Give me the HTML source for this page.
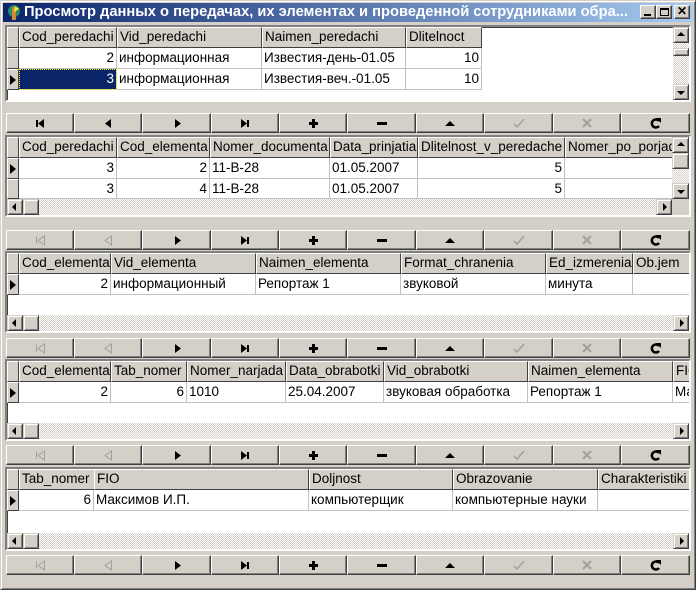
<!DOCTYPE html>
<html><head><meta charset="utf-8">
<style>
*{margin:0;padding:0;box-sizing:border-box}
body{width:696px;height:590px;background:#d4d0c8;position:relative;overflow:hidden;font-family:"Liberation Sans",Arial,sans-serif;font-size:13.5px;color:#000}
.win{position:absolute;left:0;top:0;width:696px;height:590px;border:1px solid;border-color:#d4d0c8 #404040 #404040 #d4d0c8;box-shadow:inset 1px 1px #fff,inset -1px -1px #808080}
.title{position:absolute;left:3px;top:3px;width:690px;height:19px;background:linear-gradient(to right,#0a246a,#a6caf0);color:#fff;font-weight:bold;font-size:14.7px;line-height:19px;padding-left:21px;white-space:nowrap;overflow:hidden}
.tb{position:absolute;top:5px;width:16px;height:14px;background:#d4d0c8;border:1px solid;border-color:#fff #404040 #404040 #fff;box-shadow:inset -1px -1px #808080}
.g{position:absolute;left:5px;width:686px;border:2px solid;border-color:#808080 #fff #fff #808080;box-shadow:inset 1px 1px #404040;background:#fff;overflow:hidden}
.gi{position:absolute;left:0;top:0;right:0;bottom:0;overflow:hidden}
.c{position:absolute;height:21px;line-height:20px;white-space:nowrap;overflow:hidden;padding:0 2px}
.h{background:#d4d0c8;border-left:1px solid #fff;border-top:1px solid #fff;border-right:1px solid #404040;border-bottom:1px solid #404040;line-height:18px}
.d{background:#fff;border-right:1px solid #c0c0c0;border-bottom:1px solid #c0c0c0}
.r{text-align:right}
.ind{background:#d4d0c8;border-left:1px solid #fff;border-top:1px solid #fff;border-right:1px solid #404040;border-bottom:1px solid #404040;width:12px}
.tri{position:absolute;left:2px;top:5px;width:0;height:0;border-left:6px solid #000;border-top:5px solid transparent;border-bottom:5px solid transparent}
.trk{position:absolute;background-color:#ece9e4;background-image:repeating-conic-gradient(#d4d0c8 0 25%,#fff 0 50%);background-size:2px 2px}
.sb{position:absolute;width:16px;height:16px;background:#d4d0c8;border:1px solid;border-color:#d4d0c8 #404040 #404040 #d4d0c8;box-shadow:inset 1px 1px #fff,inset -1px -1px #808080}
.sb i{position:absolute;left:50%;top:50%;width:0;height:0}
.up{margin:-3px 0 0 -4px;border-left:4px solid transparent;border-right:4px solid transparent;border-bottom:4px solid #000}
.dn{margin:-1px 0 0 -4px;border-left:4px solid transparent;border-right:4px solid transparent;border-top:4px solid #000}
.lt{margin:-4px 0 0 -3px;border-top:4px solid transparent;border-bottom:4px solid transparent;border-right:4px solid #000}
.rt{margin:-4px 0 0 -1px;border-top:4px solid transparent;border-bottom:4px solid transparent;border-left:4px solid #000}
.b{position:absolute;height:20px;background:#d4d0c8;border:1px solid;border-color:#fff #404040 #404040 #fff;box-shadow:inset -1px -1px #808080}
.b svg{position:absolute;left:50%;top:50%;margin:-6px 0 0 -6px}
</style></head><body>
<div class="win"></div>
<div class="title"><svg style="position:absolute;left:3px;top:1px" width="16" height="17" viewBox="0 0 16 17"><circle cx="8" cy="7" r="6" fill="#2a8a6a"/><path d="M6 3h4v13H6z" fill="#c83"/><path d="M9 2l4 3-5 3z" fill="#ee3"/></svg>Просмотр данных о передачах, их элементах и проведенной сотрудниками обра...</div>
<div class="tb" style="left:640px"><div style="position:absolute;left:3px;top:8px;width:7px;height:2px;background:#000"></div></div>
<div class="tb" style="left:656px"><div style="position:absolute;left:3px;top:2px;width:9px;height:8px;border:1px solid #000;border-top-width:2px"></div></div>
<div class="tb" style="left:674px"><div style="position:absolute;left:1px;top:-1px;font:bold 12px 'Liberation Sans';line-height:13px;width:12px;text-align:center">✕</div></div>

<!-- Grid 1 -->
<div class="g" style="top:25px;height:77px"><div class="gi">
<div class="c ind" style="left:0;top:0"></div>
<div class="c h" style="left:12px;top:0;width:98px">Cod_peredachi</div>
<div class="c h" style="left:110px;top:0;width:145px">Vid_peredachi</div>
<div class="c h" style="left:255px;top:0;width:144px">Naimen_peredachi</div>
<div class="c h" style="left:399px;top:0;width:76px">Dlitelnoct</div>
<div class="c ind" style="left:0;top:21px"></div>
<div class="c d r" style="left:12px;top:21px;width:98px">2</div>
<div class="c d" style="left:110px;top:21px;width:145px">информационная</div>
<div class="c d" style="left:255px;top:21px;width:144px">Известия-день-01.05</div>
<div class="c d r" style="left:399px;top:21px;width:76px">10</div>
<div class="c ind" style="left:0;top:42px"><div class="tri"></div></div>
<div class="c d r" style="left:12px;top:42px;width:98px;background:#0a246a;color:#fff;outline:1px dotted #ff0;outline-offset:-1px">3</div>
<div class="c d" style="left:110px;top:42px;width:145px">информационная</div>
<div class="c d" style="left:255px;top:42px;width:144px">Известия-веч.-01.05</div>
<div class="c d r" style="left:399px;top:42px;width:76px">10</div>
<div class="trk" style="left:666px;top:0;width:16px;height:73px"></div>
<div class="sb" style="left:666px;top:0"><i class="up"></i></div>
<div class="sb" style="left:666px;top:21px;height:8px"></div>
<div class="sb" style="left:666px;top:57px"><i class="dn"></i></div>
</div></div>

<!-- Grid 2 -->
<div class="g" style="top:135px;height:82px"><div class="gi">
<div class="c ind" style="left:0;top:0"></div>
<div class="c h" style="left:12px;top:0;width:98px">Cod_peredachi</div>
<div class="c h" style="left:110px;top:0;width:93px">Cod_elementa</div>
<div class="c h" style="left:203px;top:0;width:120px">Nomer_documenta</div>
<div class="c h" style="left:323px;top:0;width:88px">Data_prinjatia</div>
<div class="c h" style="left:411px;top:0;width:147px">Dlitelnost_v_peredache</div>
<div class="c h" style="left:558px;top:0;width:120px">Nomer_po_porjadku</div>
<div class="c ind" style="left:0;top:21px"><div class="tri"></div></div>
<div class="c d r" style="left:12px;top:21px;width:98px">3</div>
<div class="c d r" style="left:110px;top:21px;width:93px">2</div>
<div class="c d" style="left:203px;top:21px;width:120px">11-B-28</div>
<div class="c d" style="left:323px;top:21px;width:88px">01.05.2007</div>
<div class="c d r" style="left:411px;top:21px;width:147px">5</div>
<div class="c d" style="left:558px;top:21px;width:120px"></div>
<div class="c ind" style="left:0;top:42px;height:20px"></div>
<div class="c d r" style="left:12px;top:42px;width:98px;height:20px">3</div>
<div class="c d r" style="left:110px;top:42px;width:93px;height:20px">4</div>
<div class="c d" style="left:203px;top:42px;width:120px;height:20px">11-B-28</div>
<div class="c d" style="left:323px;top:42px;width:88px;height:20px">01.05.2007</div>
<div class="c d r" style="left:411px;top:42px;width:147px;height:20px">5</div>
<div class="c d" style="left:558px;top:42px;width:120px;height:20px"></div>
<div class="trk" style="left:665px;top:0;width:17px;height:62px"></div>
<div class="sb" style="left:665px;top:0;width:17px"><i class="up"></i></div>
<div class="sb" style="left:665px;top:16px;width:17px"></div>
<div class="sb" style="left:665px;top:46px;width:17px"><i class="dn"></i></div>
<div class="trk" style="left:0;top:62px;width:665px;height:16px"></div>
<div style="position:absolute;left:665px;top:62px;width:17px;height:16px;background:#d4d0c8"></div>
<div class="sb" style="left:0;top:62px"><i class="lt"></i></div>
<div class="sb" style="left:16px;top:62px"></div>
<div class="sb" style="left:649px;top:62px"><i class="rt"></i></div>
</div></div>

<!-- Grid 3 -->
<div class="g" style="top:251px;height:82px"><div class="gi">
<div class="c ind" style="left:0;top:0"></div>
<div class="c h" style="left:12px;top:0;width:92px">Cod_elementa</div>
<div class="c h" style="left:104px;top:0;width:145px">Vid_elementa</div>
<div class="c h" style="left:249px;top:0;width:145px">Naimen_elementa</div>
<div class="c h" style="left:394px;top:0;width:145px">Format_chranenia</div>
<div class="c h" style="left:539px;top:0;width:87px">Ed_izmerenia</div>
<div class="c h" style="left:626px;top:0;width:80px">Ob.jem</div>
<div class="c ind" style="left:0;top:21px"><div class="tri"></div></div>
<div class="c d r" style="left:12px;top:21px;width:92px">2</div>
<div class="c d" style="left:104px;top:21px;width:145px">информационный</div>
<div class="c d" style="left:249px;top:21px;width:145px">Репортаж 1</div>
<div class="c d" style="left:394px;top:21px;width:145px">звуковой</div>
<div class="c d" style="left:539px;top:21px;width:87px">минута</div>
<div class="c d" style="left:626px;top:21px;width:80px"></div>
<div class="trk" style="left:0;top:62px;width:682px;height:16px"></div>
<div class="sb" style="left:0;top:62px"><i class="lt"></i></div>
<div class="sb" style="left:16px;top:62px"></div>
<div class="sb" style="left:666px;top:62px"><i class="rt"></i></div>
</div></div>

<!-- Grid 4 -->
<div class="g" style="top:359px;height:82px"><div class="gi">
<div class="c ind" style="left:0;top:0"></div>
<div class="c h" style="left:12px;top:0;width:92px">Cod_elementa</div>
<div class="c h" style="left:104px;top:0;width:76px">Tab_nomer</div>
<div class="c h" style="left:180px;top:0;width:99px">Nomer_narjada</div>
<div class="c h" style="left:279px;top:0;width:98px">Data_obrabotki</div>
<div class="c h" style="left:377px;top:0;width:144px">Vid_obrabotki</div>
<div class="c h" style="left:521px;top:0;width:145px">Naimen_elementa</div>
<div class="c h" style="left:666px;top:0;width:40px">FIO</div>
<div class="c ind" style="left:0;top:21px"><div class="tri"></div></div>
<div class="c d r" style="left:12px;top:21px;width:92px">2</div>
<div class="c d r" style="left:104px;top:21px;width:76px">6</div>
<div class="c d" style="left:180px;top:21px;width:99px">1010</div>
<div class="c d" style="left:279px;top:21px;width:98px">25.04.2007</div>
<div class="c d" style="left:377px;top:21px;width:144px">звуковая обработка</div>
<div class="c d" style="left:521px;top:21px;width:145px">Репортаж 1</div>
<div class="c d" style="left:666px;top:21px;width:40px">Максимов</div>
<div class="trk" style="left:0;top:62px;width:682px;height:16px"></div>
<div class="sb" style="left:0;top:62px"><i class="lt"></i></div>
<div class="sb" style="left:16px;top:62px"></div>
<div class="sb" style="left:666px;top:62px"><i class="rt"></i></div>
</div></div>

<!-- Grid 5 -->
<div class="g" style="top:467px;height:84px"><div class="gi">
<div class="c ind" style="left:0;top:0"></div>
<div class="c h" style="left:12px;top:0;width:76px">Tab_nomer</div>
<div class="c h" style="left:87px;top:0;width:215px">FIO</div>
<div class="c h" style="left:302px;top:0;width:144px">Doljnost</div>
<div class="c h" style="left:446px;top:0;width:145px">Obrazovanie</div>
<div class="c h" style="left:591px;top:0;width:100px">Charakteristiki</div>
<div class="c ind" style="left:0;top:21px"><div class="tri"></div></div>
<div class="c d r" style="left:12px;top:21px;width:75px">6</div>
<div class="c d" style="left:87px;top:21px;width:215px">Максимов И.П.</div>
<div class="c d" style="left:302px;top:21px;width:144px">компьютерщик</div>
<div class="c d" style="left:446px;top:21px;width:145px">компьютерные науки</div>
<div class="c d" style="left:591px;top:21px;width:100px"></div>
<div class="trk" style="left:0;top:64px;width:682px;height:16px"></div>
<div class="sb" style="left:0;top:64px"><i class="lt"></i></div>
<div class="sb" style="left:16px;top:64px"></div>
<div class="sb" style="left:666px;top:64px"><i class="rt"></i></div>
</div></div>

<!-- Navigators -->
<div style="position:absolute;left:0;top:113px">
<div class="b" style="left:6px;width:68px"><svg width="12" height="12"><rect x="2" y="3" width="2" height="7"/><path d="M10 2v9L4 6.5z"/></svg></div>
<div class="b" style="left:74px;width:68px"><svg width="12" height="12"><path d="M9 2v9L3 6.5z"/></svg></div>
<div class="b" style="left:142px;width:69px"><svg width="12" height="12"><path d="M4 2v9l6-4.5z"/></svg></div>
<div class="b" style="left:211px;width:68px"><svg width="12" height="12"><path d="M2 2v9l6-4.5z"/><rect x="8" y="3" width="2" height="7"/></svg></div>
<div class="b" style="left:279px;width:68px"><svg width="12" height="12"><path d="M5 2h3v3h3v3H8v3H5V8H2V5h3z"/></svg></div>
<div class="b" style="left:347px;width:69px"><svg width="12" height="12"><rect x="1" y="5" width="10" height="3"/></svg></div>
<div class="b" style="left:416px;width:68px"><svg width="12" height="12"><path d="M1 9L6 4l5 5z"/></svg></div>
<div class="b" style="left:484px;width:69px"><svg width="12" height="12"><path d="M1 7l3 3 7-8" fill="none" stroke="#a0a0a0" stroke-width="1.5"/></svg></div>
<div class="b" style="left:553px;width:68px"><svg width="12" height="12"><path d="M2 2l8 8M10 2l-8 8" stroke="#a0a0a0" stroke-width="2" fill="none"/></svg></div>
<div class="b" style="left:621px;width:69px"><svg width="12" height="12"><path d="M9 4A4 4 0 1 0 9 9" fill="none" stroke="#000" stroke-width="2.5"/><path d="M6 1h5v5z"/></svg></div>
</div>
<div style="position:absolute;left:0;top:230px">
<div class="b" style="left:6px;width:68px"><svg width="12" height="12"><path d="M2.5 2.5v7M10.5 2v9L4 6.5z" fill="none" stroke="#a0a0a0"/></svg></div>
<div class="b" style="left:74px;width:68px"><svg width="12" height="12"><path d="M9.5 2v9L3 6.5z" fill="none" stroke="#a0a0a0"/></svg></div>
<div class="b" style="left:142px;width:69px"><svg width="12" height="12"><path d="M4 2v9l6-4.5z"/></svg></div>
<div class="b" style="left:211px;width:68px"><svg width="12" height="12"><path d="M2 2v9l6-4.5z"/><rect x="8" y="3" width="2" height="7"/></svg></div>
<div class="b" style="left:279px;width:68px"><svg width="12" height="12"><path d="M5 2h3v3h3v3H8v3H5V8H2V5h3z"/></svg></div>
<div class="b" style="left:347px;width:69px"><svg width="12" height="12"><rect x="1" y="5" width="10" height="3"/></svg></div>
<div class="b" style="left:416px;width:68px"><svg width="12" height="12"><path d="M1 9L6 4l5 5z"/></svg></div>
<div class="b" style="left:484px;width:69px"><svg width="12" height="12"><path d="M1 7l3 3 7-8" fill="none" stroke="#a0a0a0" stroke-width="1.5"/></svg></div>
<div class="b" style="left:553px;width:68px"><svg width="12" height="12"><path d="M2 2l8 8M10 2l-8 8" stroke="#a0a0a0" stroke-width="2" fill="none"/></svg></div>
<div class="b" style="left:621px;width:69px"><svg width="12" height="12"><path d="M9 4A4 4 0 1 0 9 9" fill="none" stroke="#000" stroke-width="2.5"/><path d="M6 1h5v5z"/></svg></div>
</div>
<div style="position:absolute;left:0;top:338px">
<div class="b" style="left:6px;width:68px"><svg width="12" height="12"><path d="M2.5 2.5v7M10.5 2v9L4 6.5z" fill="none" stroke="#a0a0a0"/></svg></div>
<div class="b" style="left:74px;width:68px"><svg width="12" height="12"><path d="M9.5 2v9L3 6.5z" fill="none" stroke="#a0a0a0"/></svg></div>
<div class="b" style="left:142px;width:69px"><svg width="12" height="12"><path d="M4 2v9l6-4.5z"/></svg></div>
<div class="b" style="left:211px;width:68px"><svg width="12" height="12"><path d="M2 2v9l6-4.5z"/><rect x="8" y="3" width="2" height="7"/></svg></div>
<div class="b" style="left:279px;width:68px"><svg width="12" height="12"><path d="M5 2h3v3h3v3H8v3H5V8H2V5h3z"/></svg></div>
<div class="b" style="left:347px;width:69px"><svg width="12" height="12"><rect x="1" y="5" width="10" height="3"/></svg></div>
<div class="b" style="left:416px;width:68px"><svg width="12" height="12"><path d="M1 9L6 4l5 5z"/></svg></div>
<div class="b" style="left:484px;width:69px"><svg width="12" height="12"><path d="M1 7l3 3 7-8" fill="none" stroke="#a0a0a0" stroke-width="1.5"/></svg></div>
<div class="b" style="left:553px;width:68px"><svg width="12" height="12"><path d="M2 2l8 8M10 2l-8 8" stroke="#a0a0a0" stroke-width="2" fill="none"/></svg></div>
<div class="b" style="left:621px;width:69px"><svg width="12" height="12"><path d="M9 4A4 4 0 1 0 9 9" fill="none" stroke="#000" stroke-width="2.5"/><path d="M6 1h5v5z"/></svg></div>
</div>
<div style="position:absolute;left:0;top:445px">
<div class="b" style="left:6px;width:68px"><svg width="12" height="12"><path d="M2.5 2.5v7M10.5 2v9L4 6.5z" fill="none" stroke="#a0a0a0"/></svg></div>
<div class="b" style="left:74px;width:68px"><svg width="12" height="12"><path d="M9.5 2v9L3 6.5z" fill="none" stroke="#a0a0a0"/></svg></div>
<div class="b" style="left:142px;width:69px"><svg width="12" height="12"><path d="M4 2v9l6-4.5z"/></svg></div>
<div class="b" style="left:211px;width:68px"><svg width="12" height="12"><path d="M2 2v9l6-4.5z"/><rect x="8" y="3" width="2" height="7"/></svg></div>
<div class="b" style="left:279px;width:68px"><svg width="12" height="12"><path d="M5 2h3v3h3v3H8v3H5V8H2V5h3z"/></svg></div>
<div class="b" style="left:347px;width:69px"><svg width="12" height="12"><rect x="1" y="5" width="10" height="3"/></svg></div>
<div class="b" style="left:416px;width:68px"><svg width="12" height="12"><path d="M1 9L6 4l5 5z"/></svg></div>
<div class="b" style="left:484px;width:69px"><svg width="12" height="12"><path d="M1 7l3 3 7-8" fill="none" stroke="#a0a0a0" stroke-width="1.5"/></svg></div>
<div class="b" style="left:553px;width:68px"><svg width="12" height="12"><path d="M2 2l8 8M10 2l-8 8" stroke="#a0a0a0" stroke-width="2" fill="none"/></svg></div>
<div class="b" style="left:621px;width:69px"><svg width="12" height="12"><path d="M9 4A4 4 0 1 0 9 9" fill="none" stroke="#000" stroke-width="2.5"/><path d="M6 1h5v5z"/></svg></div>
</div>
<div style="position:absolute;left:0;top:555px">
<div class="b" style="left:6px;width:68px"><svg width="12" height="12"><path d="M2.5 2.5v7M10.5 2v9L4 6.5z" fill="none" stroke="#a0a0a0"/></svg></div>
<div class="b" style="left:74px;width:68px"><svg width="12" height="12"><path d="M9.5 2v9L3 6.5z" fill="none" stroke="#a0a0a0"/></svg></div>
<div class="b" style="left:142px;width:69px"><svg width="12" height="12"><path d="M4 2v9l6-4.5z"/></svg></div>
<div class="b" style="left:211px;width:68px"><svg width="12" height="12"><path d="M2 2v9l6-4.5z"/><rect x="8" y="3" width="2" height="7"/></svg></div>
<div class="b" style="left:279px;width:68px"><svg width="12" height="12"><path d="M5 2h3v3h3v3H8v3H5V8H2V5h3z"/></svg></div>
<div class="b" style="left:347px;width:69px"><svg width="12" height="12"><rect x="1" y="5" width="10" height="3"/></svg></div>
<div class="b" style="left:416px;width:68px"><svg width="12" height="12"><path d="M1 9L6 4l5 5z"/></svg></div>
<div class="b" style="left:484px;width:69px"><svg width="12" height="12"><path d="M1 7l3 3 7-8" fill="none" stroke="#a0a0a0" stroke-width="1.5"/></svg></div>
<div class="b" style="left:553px;width:68px"><svg width="12" height="12"><path d="M2 2l8 8M10 2l-8 8" stroke="#a0a0a0" stroke-width="2" fill="none"/></svg></div>
<div class="b" style="left:621px;width:69px"><svg width="12" height="12"><path d="M9 4A4 4 0 1 0 9 9" fill="none" stroke="#000" stroke-width="2.5"/><path d="M6 1h5v5z"/></svg></div>
</div>
</body></html>
